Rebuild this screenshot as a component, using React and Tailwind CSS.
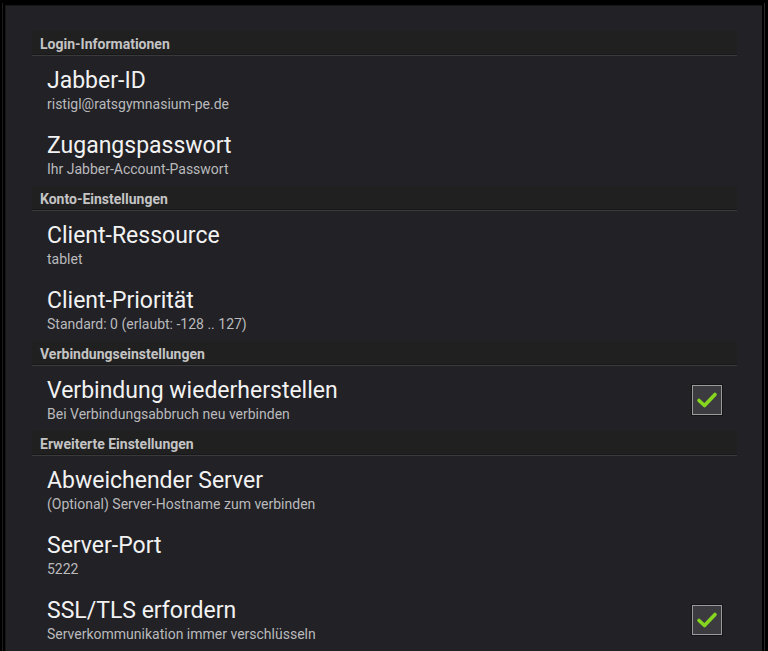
import { useState } from 'react';

const sections = [
  {
    title: 'Login-Informationen',
    items: [
      { title: 'Jabber-ID', summary: 'ristigl@ratsgymnasium-pe.de' },
      { title: 'Zugangspasswort', summary: 'Ihr Jabber-Account-Passwort' },
    ],
  },
  {
    title: 'Konto-Einstellungen',
    items: [
      { title: 'Client-Ressource', summary: 'tablet' },
      { title: 'Client-Priorität', summary: 'Standard: 0 (erlaubt: -128 .. 127)' },
    ],
  },
  {
    title: 'Verbindungseinstellungen',
    items: [
      { key: 'reconnect', title: 'Verbindung wiederherstellen', summary: 'Bei Verbindungsabbruch neu verbinden', checkbox: true },
    ],
  },
  {
    title: 'Erweiterte Einstellungen',
    items: [
      { title: 'Abweichender Server', summary: '(Optional) Server-Hostname zum verbinden' },
      { title: 'Server-Port', summary: '5222' },
      { key: 'ssl', title: 'SSL/TLS erfordern', summary: 'Serverkommunikation immer verschlüsseln', checkbox: true },
    ],
  },
];

function CheckBox({ checked, onToggle }) {
  return (
    <button
      onClick={onToggle}
      className="w-[30px] h-[30px] border border-[#9a9a9a] bg-[#3b3b40] flex items-center justify-center shadow-[0_0_0_1px_#151517]"
    >
      {checked && (
        <svg width="22" height="18" viewBox="0 0 22 18">
          <path d="M3 9.5 L8.5 14.5 L19 3.5" fill="none" stroke="#86d51f" strokeWidth="3.6" strokeLinecap="round" strokeLinejoin="round" />
        </svg>
      )}
    </button>
  );
}

function PrefItem({ item, checked, onToggle }) {
  return (
    <div className="h-[65px] flex items-start pl-[15px] pr-[15px]">
      <div className="flex-1 pt-[11px] whitespace-nowrap">
        <div className="text-[23px] leading-[27px] text-[#f2f2f2]">{item.title}</div>
        <div className="mt-[2px] text-[14px] leading-[17px] text-[#bababc]">{item.summary}</div>
      </div>
      {item.checkbox && (
        <div className="pt-[19px]">
          <CheckBox checked={checked} onToggle={onToggle} />
        </div>
      )}
    </div>
  );
}

export default function App() {
  const [checks, setChecks] = useState({ reconnect: true, ssl: true });

  return (
    <div
      className="w-[768px] h-[651px] overflow-hidden bg-black flex"
      style={{ fontFamily: 'Roboto, "Noto Sans", sans-serif' }}
    >
      <div className="w-[5px] pl-[2px] pt-[3px]">
        <div className="w-px h-full bg-[#1c1c1e]" />
      </div>
      <div className="flex-1 pt-[5px]">
        <div className="h-full bg-[#212126] border-l border-t border-[#151517] pt-[25px] pl-[26px] pr-[25px]">
          {sections.map((section) => (
            <div key={section.title}>
              <div className="h-[25px] flex flex-col justify-end bg-[#202021]">
                <div className="pl-2 pb-[2px] text-[14px] leading-4 font-bold text-[#c4c4c4] whitespace-nowrap">{section.title}</div>
                <div className="h-px bg-[#19191b]" />
                <div className="h-px bg-[#3a3a3c]" />
              </div>
              {section.items.map((item) => (
                <PrefItem
                  key={item.title}
                  item={item}
                  checked={item.key ? checks[item.key] : false}
                  onToggle={() => setChecks((c) => ({ ...c, [item.key]: !c[item.key] }))}
                />
              ))}
            </div>
          ))}
        </div>
      </div>
      <div className="w-[6px] pl-[2px] pt-[3px]">
        <div className="w-px h-full bg-[#2a2a2c]" />
      </div>
    </div>
  );
}
